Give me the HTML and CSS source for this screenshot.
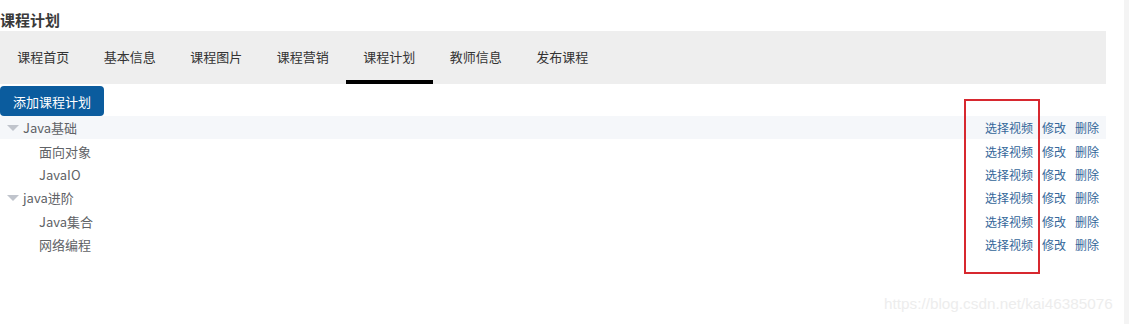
FILE: index.html
```html
<!DOCTYPE html>
<html lang="zh-CN">
<head>
<meta charset="UTF-8">
<title>课程计划</title>
<link rel="stylesheet" href="styles.css">
</head>
<body>

<div class="page">
  <h3 class="page-title">课程计划</h3>

  <!-- Tabs -->
  <div class="tabs">
    <a class="tab">课程首页</a>
    <a class="tab">基本信息</a>
    <a class="tab">课程图片</a>
    <a class="tab">课程营销</a>
    <a class="tab active">课程计划</a>
    <a class="tab">教师信息</a>
    <a class="tab">发布课程</a>
  </div>

  <button class="btn-primary">添加课程计划</button>

  <!-- Tree of teachplan -->
  <div class="tree">
    <div class="node current">
      <span class="caret"></span><span class="label">Java基础</span>
      <span class="ops"><a>选择视频</a><a>修改</a><a>删除</a></span>
    </div>
    <div class="node child">
      <span class="label">面向对象</span>
      <span class="ops"><a>选择视频</a><a>修改</a><a>删除</a></span>
    </div>
    <div class="node child">
      <span class="label">JavaIO</span>
      <span class="ops"><a>选择视频</a><a>修改</a><a>删除</a></span>
    </div>
    <div class="node">
      <span class="caret"></span><span class="label">java进阶</span>
      <span class="ops"><a>选择视频</a><a>修改</a><a>删除</a></span>
    </div>
    <div class="node child">
      <span class="label">Java集合</span>
      <span class="ops"><a>选择视频</a><a>修改</a><a>删除</a></span>
    </div>
    <div class="node child">
      <span class="label">网络编程</span>
      <span class="ops"><a>选择视频</a><a>修改</a><a>删除</a></span>
    </div>
  </div>

  <!-- red annotation box -->
  <div class="mark"></div>

  <div class="watermark">https://blog.csdn.net/kai46385076</div>
</div>

<div class="scroll-strip"></div>

</body>
</html>
```

FILE: styles.css
```css
/* General */
body {
  margin: 0;
  background: #fff;
  font-family: "Microsoft YaHei", "Noto Sans CJK SC", "Liberation Sans", sans-serif;
  color: #333;
  height: 324px;
  overflow: hidden;
}

.page {
  position: relative;
  width: 1106px;
  height: 324px;
}

.page-title {
  margin: 0;
  height: 31px;
  padding-top: 10px;
  box-sizing: border-box;
  font-size: 15px;
  line-height: 20px;
  font-weight: bold;
  color: #3a3a3a;
}

/* Tabs */
.tabs {
  display: flex;
  height: 53px;
  background: #eeeeee;
}

.tab {
  width: 86.5px;
  box-sizing: border-box;
  text-align: center;
  font-size: 13px;
  line-height: 51px;
  color: #333;
  border-bottom: 4px solid transparent;
  height: 53px;
  cursor: pointer;
}

.tab.active {
  border-bottom-color: #000;
}

.btn-primary {
  display: block;
  margin-top: 2px;
  width: 104px;
  height: 30px;
  padding: 0;
  border: none;
  border-radius: 4px;
  background: #0b5c9e;
  color: #fff;
  font-family: inherit;
  font-size: 13px;
}

/* Tree */
.node {
  display: flex;
  align-items: center;
  height: 23.4px;
  font-size: 13px;
  color: #606266;
  padding-left: 7px;
}

.node.current {
  background: #f5f7fa;
}

.node.child {
  padding-left: 39px;
}

.caret {
  width: 0;
  height: 0;
  border-left: 6px solid transparent;
  border-right: 6px solid transparent;
  border-top: 6px solid #c0c4cc;
  margin-right: 4px;
  margin-top: 1px;
}

.label {
  flex: 1;
}

.ops {
  display: flex;
  gap: 9px;
  padding-right: 7px;
  font-size: 12px;
}

.ops a {
  color: #336699;
  cursor: pointer;
}

.mark {
  position: absolute;
  left: 964px;
  top: 99px;
  width: 72px;
  height: 171px;
  border: 2px solid #d7282f;
}

.watermark {
  position: absolute;
  left: 884px;
  top: 295px;
  font-family: "Liberation Sans", sans-serif;
  font-size: 15.3px;
  color: #ededed;
}

.scroll-strip {
  position: absolute;
  right: 0;
  top: 0;
  width: 5px;
  height: 324px;
  background: #f4f4f4;
}
```
